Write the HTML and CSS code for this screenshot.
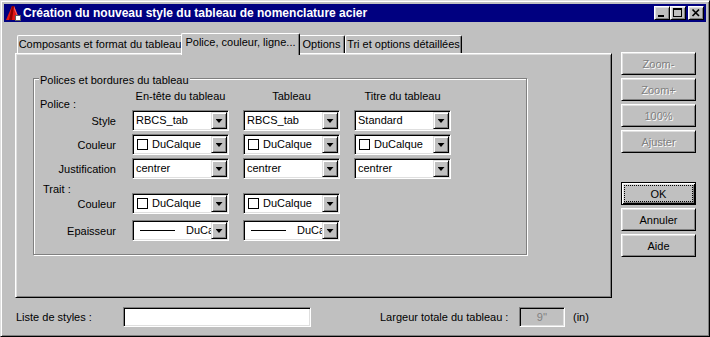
FILE: index.html
```html
<!DOCTYPE html>
<html lang="fr">
<head>
<meta charset="utf-8">
<title>Création du nouveau style du tableau de nomenclature acier</title>
<link rel="stylesheet" href="styles.css">
</head>
<body>
<div class="window">
  <div class="titlebar">
    <svg class="app-icon" width="16" height="16" viewBox="0 0 16 16">
      <polygon points="1,15 7,1 9,1 13,11 13,15" fill="#e01818"/>
      <polygon points="7,1 9,1 7,15 4,15" fill="#900000"/>
      <polygon points="9,1 13,11 12,11 9,4" fill="#ff6060"/>
      <rect x="10.5" y="10.5" width="5" height="5" fill="#fff" stroke="#606060"/>
    </svg>
    <span class="title">Création du nouveau style du tableau de nomenclature acier</span>
    <div class="controls">
      <div class="ctl"><svg width="14" height="12" viewBox="0 0 14 12" shape-rendering="crispEdges"><rect x="3" y="8" width="6" height="2" fill="#000"/></svg></div>
      <div class="ctl"><svg width="14" height="12" viewBox="0 0 14 12" shape-rendering="crispEdges"><rect x="2.5" y="1.5" width="8" height="8" fill="none" stroke="#000"/><rect x="2" y="1" width="9" height="2" fill="#000"/></svg></div>
      <div class="ctl close"><svg width="14" height="12" viewBox="0 0 14 12"><path d="M3.5 2.5 L10 9 M10 2.5 L3.5 9" stroke="#000" stroke-width="1.7" fill="none"/></svg></div>
    </div>
  </div>

  <div class="body">
    <div class="main">
      <div class="left">
        <div class="tabs">
          <div class="tab t1">Composants et format du tableau</div>
          <div class="tab t2 active">Police, couleur, ligne...</div>
          <div class="tab t3">Options</div>
          <div class="tab t4">Tri et options détaillées</div>
        </div>
        <div class="panel">
          <div class="group">
            <span class="legend">Polices et bordures du tableau</span>
            <div class="grid">
              <div class="lbl-head">Police :</div>
              <div class="colhead">En-tête du tableau</div>
              <div class="colhead">Tableau</div>
              <div class="colhead">Titre du tableau</div>

              <div class="lbl">Style</div>
              <div class="combo"><span class="val">RBCS_tab</span><span class="drop"><i class="arrow"></i></span></div>
              <div class="combo"><span class="val">RBCS_tab</span><span class="drop"><i class="arrow"></i></span></div>
              <div class="combo"><span class="val">Standard</span><span class="drop"><i class="arrow"></i></span></div>

              <div class="lbl">Couleur</div>
              <div class="combo"><span class="val"><i class="swatch"></i>DuCalque</span><span class="drop"><i class="arrow"></i></span></div>
              <div class="combo"><span class="val"><i class="swatch"></i>DuCalque</span><span class="drop"><i class="arrow"></i></span></div>
              <div class="combo"><span class="val"><i class="swatch"></i>DuCalque</span><span class="drop"><i class="arrow"></i></span></div>

              <div class="lbl">Justification</div>
              <div class="combo"><span class="val">centrer</span><span class="drop"><i class="arrow"></i></span></div>
              <div class="combo"><span class="val">centrer</span><span class="drop"><i class="arrow"></i></span></div>
              <div class="combo"><span class="val">centrer</span><span class="drop"><i class="arrow"></i></span></div>

              <div class="lbl-trait">Trait :</div>

              <div class="lbl">Couleur</div>
              <div class="combo"><span class="val"><i class="swatch"></i>DuCalque</span><span class="drop"><i class="arrow"></i></span></div>
              <div class="combo"><span class="val"><i class="swatch"></i>DuCalque</span><span class="drop"><i class="arrow"></i></span></div>
              <div></div>

              <div class="lbl">Epaisseur</div>
              <div class="combo"><span class="val"><i class="lineweight"></i>DuCalque</span><span class="drop"><i class="arrow"></i></span></div>
              <div class="combo"><span class="val"><i class="lineweight"></i>DuCalque</span><span class="drop"><i class="arrow"></i></span></div>
              <div></div>
            </div>
          </div>
        </div>
      </div>

      <div class="side">
        <div class="btn disabled">Zoom-</div>
        <div class="btn disabled">Zoom+</div>
        <div class="btn disabled">100%</div>
        <div class="btn disabled">Ajuster</div>
        <div class="btn default ok"><span class="focus">OK</span></div>
        <div class="btn">Annuler</div>
        <div class="btn">Aide</div>
      </div>
    </div>

    <div class="bottom">
      <span class="b-label">Liste de styles :</span>
      <div class="field wide"></div>
      <span class="b-label2">Largeur totale du tableau :</span>
      <div class="field small disabled-field">9''</div>
      <span class="unit">(in)</span>
    </div>
  </div>
</div>
</body>
</html>
```

FILE: styles.css
```css
* { box-sizing: border-box; margin: 0; padding: 0; }

html, body {
  width: 710px;
  height: 337px;
  overflow: hidden;
  background: #c0c0c0;
}

body {
  font-family: "Liberation Sans", Arial, sans-serif;
  font-size: 11px;
  color: #000;
}

.window {
  width: 710px;
  height: 337px;
  border: 1px solid;
  border-color: #dfdfdf #000 #000 #dfdfdf;
  box-shadow: inset 1px 1px #fff, inset -1px -1px #808080;
  padding: 3px;
  background: #c0c0c0;
  display: flex;
  flex-direction: column;
}

/* ---------- title bar ---------- */
.titlebar {
  height: 18px;
  flex: none;
  background: #000080;
  color: #fff;
  display: flex;
  align-items: center;
  padding: 0 2px 0 1px;
}

.app-icon { flex: none; display: block; }

.title {
  flex: 1;
  margin-left: 2px;
  font-weight: bold;
  font-size: 12px;
  line-height: 18px;
  white-space: nowrap;
  overflow: hidden;
}

.controls { display: flex; flex: none; }

.ctl {
  width: 16px;
  height: 14px;
  background: #c0c0c0;
  border: 1px solid;
  border-color: #fff #000 #000 #fff;
  box-shadow: inset 1px 1px #dfdfdf, inset -1px -1px #808080;
}
.ctl svg { display: block; }
.ctl.close { margin-left: 2px; }

/* ---------- body ---------- */
.body {
  flex: 1;
  display: flex;
  flex-direction: column;
  padding: 11px 0 0 11px;
}

.main { display: flex; align-items: flex-start; }

.left { width: 597px; flex: none; }

.tabs {
  display: flex;
  align-items: flex-end;
  height: 20px;
  padding-left: 2px;
  position: relative;
  z-index: 2;
}

.tab {
  height: 18px;
  background: #c0c0c0;
  border-top: 1px solid #fff;
  border-left: 1px solid #fff;
  border-right: 1px solid #000;
  box-shadow: inset -1px 0 #808080;
  border-radius: 2px 2px 0 0;
  line-height: 16px;
  text-align: center;
  white-space: nowrap;
}

.t1 { width: 166px; }
.t2 { width: 119px; }
.t3 { width: 47px; }
.t4 { width: 117px; }

.tab.active {
  height: 22px;
  margin: 0 -2px -2px -2px;
  position: relative;
  z-index: 3;
}

.panel {
  height: 245px;
  border: 1px solid;
  border-color: #fff #000 #000 #fff;
  box-shadow: inset 1px 1px #dfdfdf, inset -1px -1px #808080;
  padding: 24px 0 0 17px;
  position: relative;
  z-index: 1;
}

/* ---------- group box ---------- */
.group {
  position: relative;
  width: 494px;
  height: 177px;
  border: 1px solid #808080;
  box-shadow: inset 1px 1px #fff, 1px 1px #fff;
  padding-top: 9px;
}

.legend {
  position: absolute;
  left: 5px;
  top: -5px;
  padding: 0 1px;
  line-height: 13px;
  background: #c0c0c0;
  white-space: nowrap;
}

.grid {
  display: grid;
  grid-template-columns: 84px 97px 97px 97px;
  grid-template-rows: 22px 24px 24px 24px 11px 27px 21px;
  column-gap: 14px;
  align-items: start;
}

.lbl-head {
  line-height: 13px;
  margin-top: 10px;
  padding-left: 6px;
}

.colhead {
  line-height: 13px;
  margin-top: 2px;
  text-align: center;
  white-space: nowrap;
}

.lbl {
  line-height: 21px;
  padding-top: 1px;
  text-align: right;
  padding-right: 2px;
  white-space: nowrap;
}

.lbl-trait {
  grid-column: 1 / -1;
  line-height: 13px;
  margin-top: 1px;
  padding-left: 9px;
}

/* ---------- combo box ---------- */
.combo {
  width: 97px;
  height: 21px;
  background: #fff;
  border: 1px solid;
  border-color: #808080 #fff #fff #808080;
  box-shadow: inset 1px 1px #000, inset -1px -1px #dfdfdf;
  padding: 1px;
  display: flex;
  align-items: center;
}

.val {
  flex: 1;
  min-width: 0;
  height: 17px;
  padding-left: 2px;
  line-height: 17px;
  white-space: nowrap;
  overflow: hidden;
  display: flex;
  align-items: center;
}

.swatch {
  display: block;
  flex: none;
  width: 11px;
  height: 11px;
  border: 1px solid #000;
  background: #fff;
  margin: 0 4px 0 1px;
}

.lineweight {
  display: block;
  flex: none;
  width: 35px;
  height: 1px;
  background: #000;
  margin: 0 11px 0 4px;
}

.drop {
  flex: none;
  width: 16px;
  height: 17px;
  background: #c0c0c0;
  border: 1px solid;
  border-color: #dfdfdf #000 #000 #dfdfdf;
  box-shadow: inset 1px 1px #fff, inset -1px -1px #808080;
  display: flex;
  align-items: center;
  justify-content: center;
}

.arrow {
  display: block;
  width: 7px;
  height: 4px;
  background: #000;
  clip-path: polygon(0 0, 100% 0, 50% 100%);
  margin-top: 1px;
}

/* ---------- side buttons ---------- */
.side {
  width: 75px;
  flex: none;
  margin-left: 9px;
  margin-top: 19px;
  display: flex;
  flex-direction: column;
  gap: 3px;
}

.btn {
  width: 75px;
  height: 23px;
  background: #c0c0c0;
  border: 1px solid;
  border-color: #fff #000 #000 #fff;
  box-shadow: inset 1px 1px #dfdfdf, inset -1px -1px #808080;
  display: flex;
  align-items: center;
  justify-content: center;
  white-space: nowrap;
}

.btn.disabled {
  color: #808080;
  text-shadow: 1px 1px #fff;
}

.btn.ok { margin-top: 26px; }

.btn.default {
  border-color: #000;
  box-shadow: inset 1px 1px #fff, inset -1px -1px #000, inset 2px 2px #dfdfdf, inset -2px -2px #808080;
  padding: 2px;
}

.focus {
  flex: 1;
  align-self: stretch;
  border: 1px dotted #000;
  display: flex;
  align-items: center;
  justify-content: center;
}

/* ---------- bottom row ---------- */
.bottom {
  display: flex;
  align-items: center;
  margin-top: 9px;
  height: 20px;
}

.b-label { width: 108px; padding-left: 1px; white-space: nowrap; }
.b-label2 { width: 139px; margin-left: 69px; white-space: nowrap; }
.unit { margin-left: 8px; }

.field {
  height: 20px;
  background: #fff;
  border: 1px solid;
  border-color: #808080 #fff #fff #808080;
  box-shadow: inset 1px 1px #000, inset -1px -1px #dfdfdf;
}
.field.wide { width: 188px; }
.field.small {
  width: 46px;
  display: flex;
  align-items: center;
  justify-content: center;
}
.disabled-field {
  background: #c0c0c0;
  color: #808080;
}
```
